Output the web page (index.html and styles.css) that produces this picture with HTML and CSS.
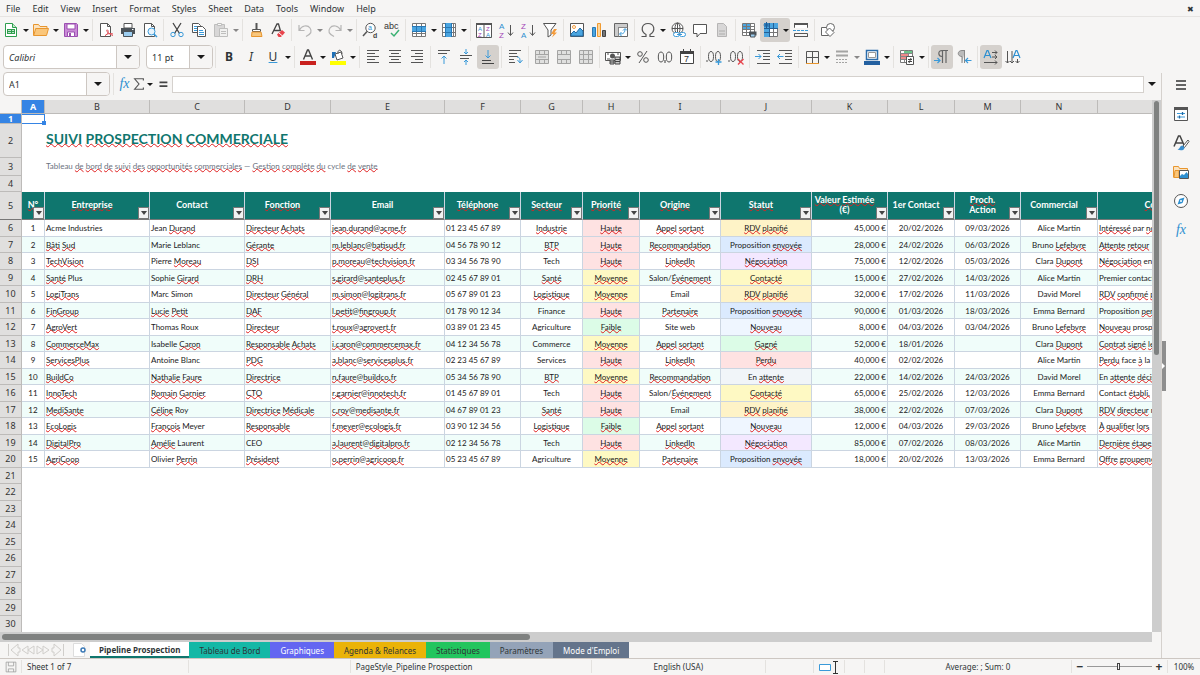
FILE: index.html
```html
<!DOCTYPE html>
<html lang="fr">
<head>
  <meta charset="UTF-8">
  <meta name="viewport" content="width=device-width, initial-scale=1.0">
  <title>Suivi prospection commerciale</title>
  <link rel="stylesheet" href="styles.css">
</head>
<body>
  <nav class="menubar">
    <button>File</button><button>Edit</button><button>View</button><button>Insert</button><button>Format</button><button>Styles</button><button>Sheet</button><button>Data</button><button>Tools</button><button>Window</button><button>Help</button>
    <button class="close" aria-label="Close">✖</button>
  </nav>

  <div class="toolbar">
    <button class="tool" aria-label="New"><svg viewBox="0 0 16 16"><path d="M2.5 1.500h7l4 4v9h-11z" fill="#fff" stroke="#2f9e4f"/><path d="M9.500 1.500v4h4" fill="#bfe8c8" stroke="#2f9e4f"/><path d="M4 7h8v5H4z" fill="#2f9e4f"/><path d="M5 8.500h3M9 8.500h2M5 10.500h3M9 10.500h2" stroke="#bfe8c8"/></svg></button>
    <button class="arrow" aria-label="New options"></button>
    <button class="tool" aria-label="Open"><svg viewBox="0 0 16 16"><path d="M.5 13.500v-11h5l1.500 2h7v3" fill="#fbe3c0" stroke="#e8962e"/><path d="M.7 13.500l2-7H15.500l-2 7z" fill="#fac67a" stroke="#e8962e"/></svg></button>
    <button class="arrow" aria-label="Open options"></button>
    <button class="tool" aria-label="Save"><svg viewBox="0 0 16 16"><path d="M1.500 1.500h12l1 1v12h-13z" fill="#c98ad6" stroke="#9b4fb0"/><path d="M4 2h8v5H4z" fill="#fff" stroke="#9b4fb0"/><path d="M4.500 10h7v4.500h-7z" fill="#fff" stroke="#9b4fb0"/><path d="M6 11h2v3H6z" fill="#9b4fb0"/></svg></button>
    <button class="arrow" aria-label="Save options"></button>
    <span class="sep"></span>
    <button class="tool" aria-label="Export as PDF"><svg viewBox="0 0 16 16"><path d="M2.500 1.500h7l3 3v10h-10z" fill="#fff" stroke="#555"/><path d="M9.500 1.500v3h3" fill="none" stroke="#555"/><path d="M7 14c3-2 4-5 2.500-6s-1.500 3 5.500 5.500M7.500 13c2-1.500 5-2 7.500-1" fill="none" stroke="#e05058"/></svg></button>
    <button class="tool" aria-label="Print"><svg viewBox="0 0 16 16"><path d="M4 1.500h8V6H4z" fill="#fff" stroke="#555"/><path d="M1 6h14v6H1z" fill="#4b5258"/><path d="M12 7.500h1.500" stroke="#fff"/><path d="M3.500 9.500h9v5h-9z" fill="#9ccdf0" stroke="#4b5258"/></svg></button>
    <button class="tool" aria-label="Print preview"><svg viewBox="0 0 16 16"><path d="M2.500 1.500h7l3 3v10h-10z" fill="#fff" stroke="#555"/><path d="M9.500 1.500v3h3" fill="none" stroke="#555"/><circle cx="9.500" cy="9.500" r="3.500" fill="#e8f3fb" stroke="#3a9ad9"/><path d="M12 12l3 3" stroke="#3a9ad9" stroke-width="1.500"/></svg></button>
    <span class="sep"></span>
    <button class="tool" aria-label="Cut"><svg viewBox="0 0 16 16"><path d="M4 1l6.500 10.500M12 1L5.500 11.500" stroke="#444" stroke-width="1.300"/><circle cx="4" cy="12.500" r="2.200" fill="none" stroke="#3a9ad9"/><circle cx="12" cy="12.500" r="2.200" fill="none" stroke="#3a9ad9"/></svg></button>
    <button class="tool" aria-label="Copy"><svg viewBox="0 0 16 16"><path d="M1.500 1.500h6l2 2v7h-8z" fill="#fff" stroke="#555"/><path d="M3 4.500h4M3 6.500h4M3 8.500h3" stroke="#3a9ad9"/><path d="M6.500 4.500h5l3 3v7h-8z" fill="#fff" stroke="#555"/><path d="M8 8.500h4M8 10.500h5M8 12.500h5" stroke="#3a9ad9"/></svg></button>
    <button class="tool faded" aria-label="Paste"><svg viewBox="0 0 16 16"><path d="M1.500 2.500h10v12h-10z" fill="#bbb" stroke="#888"/><path d="M4.500 1.500h4v2h-4z" fill="#fff" stroke="#888"/><path d="M6.500 6.500h8v8h-8z" fill="#eee" stroke="#888"/><path d="M8 9.500h5M8 11.500h5" stroke="#888"/></svg></button>
    <button class="arrow faded" aria-label="Paste options"></button>
    <span class="sep"></span>
    <button class="tool" aria-label="Clone formatting"><svg viewBox="0 0 16 16"><path d="M8.500 1v6" stroke="#555" stroke-width="2"/><path d="M4.500 7.500h8v2h-8z" fill="#fff" stroke="#555"/><path d="M4 10h9l1 4.500H3.500z" fill="#f8c77e" stroke="#e8962e"/></svg></button>
    <button class="tool" aria-label="Clear formatting"><svg viewBox="0 0 16 16"><path d="M2 12L7 2h1.500l2 7M4 8.500h6" fill="none" stroke="#444" stroke-width="1.300"/><path d="M7 12.500L12 8l3 2.500-4 4.500H8.500z" fill="#e8444c"/><path d="M9 11l3.500 3" stroke="#fff"/></svg></button>
    <span class="sep"></span>
    <button class="tool faded" aria-label="Undo"><svg viewBox="0 0 16 16"><path d="M2 3v5.500h5.500M2.500 8c2-4.500 8-5.500 10.500-2s1 6-4 8.500" fill="none" stroke="#777" stroke-width="1.200"/></svg></button>
    <button class="arrow faded" aria-label="Undo history"></button>
    <button class="tool faded" aria-label="Redo"><svg viewBox="0 0 16 16"><path d="M14 3v5.500H8.500M13.500 8C11.500 3.500 5.500 2.500 3 6s-1 6 4 8.500" fill="none" stroke="#777" stroke-width="1.200"/></svg></button>
    <button class="arrow faded" aria-label="Redo history"></button>
    <span class="sep"></span>
    <button class="tool" aria-label="Find and replace"><svg viewBox="0 0 16 16"><circle cx="8.500" cy="6" r="4.700" fill="#fff" stroke="#555"/><path d="M5 9.500L1 14" stroke="#555" stroke-width="1.500"/><text x="6" y="8" font-size="7" fill="#2d8fd0">a</text><text x="11" y="16" font-size="7" font-weight="bold" fill="#444">d</text></svg></button>
    <button class="tool" aria-label="Spelling"><svg viewBox="0 0 16 16"><text x="0" y="7" font-size="9" fill="#333">abc</text><path d="M7 11l3 3 5-6" fill="none" stroke="#3bb273" stroke-width="1.500"/></svg></button>
    <span class="sep"></span>
    <button class="tool" aria-label="Row"><svg viewBox="0 0 16 16"><path d="M1.500 1.500h13v13h-13z" fill="#fff" stroke="#777"/><path d="M1.500 11.500h13M5.500 1v14M10.500 1v14" stroke="#777"/><path d="M1 5h14v4H1z" fill="#4aa5e0"/><path d="M1 4.500h14M1 9.500h14M5.500 5v4M10.500 5v4" stroke="#2878b5"/></svg></button>
    <button class="arrow" aria-label="Row options"></button>
    <button class="tool" aria-label="Column"><svg viewBox="0 0 16 16"><path d="M1.500 1.500h13v13h-13z" fill="#fff" stroke="#777"/><path d="M12.500 1v14M1.500 5.500h13M1.500 10.500h13" stroke="#777"/><path d="M5 1h5v14H5z" fill="#4aa5e0"/><path d="M4.500 1v14M10.500 1v14M5 5.500h5M5 10.500h5" stroke="#2878b5"/></svg></button>
    <button class="arrow" aria-label="Column options"></button>
    <span class="sep"></span>
    <button class="tool" aria-label="Sort"><svg viewBox="0 0 16 16"><path d="M.5 1.500h15v14H.5zM8 2v13" fill="#fff" stroke="#555"/><path d="M0 1h16v2H0z" fill="#555"/><text x="2" y="9" font-size="6" fill="#2d8fd0">A</text><text x="2" y="15" font-size="6" fill="#a33fb5">Z</text><text x="10" y="9" font-size="6" fill="#a33fb5">Z</text><text x="10" y="15" font-size="6" fill="#2d8fd0">A</text></svg></button>
    <button class="tool" aria-label="Sort ascending"><svg viewBox="0 0 16 16"><text x="1" y="7" font-size="8" fill="#2d8fd0">A</text><text x="1" y="16" font-size="8" fill="#a33fb5">Z</text><path d="M12.500 3v10M10 10.500l2.500 3 2.500-3" fill="none" stroke="#555"/></svg></button>
    <button class="tool" aria-label="Sort descending"><svg viewBox="0 0 16 16"><text x="1" y="7" font-size="8" fill="#a33fb5">Z</text><text x="1" y="16" font-size="8" fill="#2d8fd0">A</text><path d="M12.500 3v10M10 10.500l2.500 3 2.500-3" fill="none" stroke="#555"/></svg></button>
    <button class="tool" aria-label="AutoFilter"><svg viewBox="0 0 16 16"><path d="M1.500 1.500h12.500L9 8v5l-3 2V8z" fill="#fff" stroke="#555"/><path d="M12 7l-3 5h2.500L10 15.500l5-5h-2.500L15 7z" fill="#f39b3b"/></svg></button>
    <span class="sep"></span>
    <button class="tool" aria-label="Insert image"><svg viewBox="0 0 16 16"><path d="M1.500 1.500h13v13h-13z" fill="#fff" stroke="#555"/><circle cx="5" cy="5" r="1.500" fill="#fff" stroke="#f39b3b"/><path d="M2 14v-2l3-3 2 2 4-5 3 3v5z" fill="#4aa5e0" stroke="#236aa5"/></svg></button>
    <button class="tool" aria-label="Insert chart"><svg viewBox="0 0 16 16"><path d="M1.500 5.500h3v9h-3z" fill="#4aa5e0" stroke="#2878b5"/><path d="M6.500 1.500h3v13h-3z" fill="#fbd59c" stroke="#f09a30"/><path d="M11.500 8.500h3v6h-3z" fill="#777" stroke="#444"/></svg></button>
    <button class="tool" aria-label="Pivot table"><svg viewBox="0 0 16 16"><path d="M1.500 1.500h13v13h-13z" fill="#fff" stroke="#666"/><path d="M2 2h3v12H2zM2 2h12v3H2z" fill="#ccc"/><path d="M5.500 5v9.500M5 5.500h9.500" stroke="#888"/><path d="M7 12c4 0 5-2 5-5M10 8.500L12 6.500l2 2M8.500 10L6.500 12l2 2" fill="none" stroke="#3a9ad9"/></svg></button>
    <span class="sep"></span>
    <button class="tool" aria-label="Special character"><svg viewBox="0 0 16 16"><path d="M1.500 14.500H6v-2C0 9 1.500 1.500 8 1.500S16 9 10 12.500v2h4.500" fill="none" stroke="#555" stroke-width="1.200"/></svg></button>
    <button class="arrow" aria-label="Character options"></button>
    <button class="tool" aria-label="Hyperlink"><svg viewBox="0 0 16 16"><circle cx="7.500" cy="6.500" r="5.500" fill="#fff" stroke="#555"/><path d="M2 6.500h11M7.500 1v11" stroke="#555"/><ellipse cx="7.500" cy="6.500" rx="2.500" ry="5.500" fill="none" stroke="#555"/><rect x="3.500" y="10.500" width="6" height="4" rx="2" fill="#fff" stroke="#3a9ad9"/><rect x="9.500" y="10.500" width="6" height="4" rx="2" fill="#fff" stroke="#3a9ad9"/><path d="M7 12.500h5" stroke="#3a9ad9"/></svg></button>
    <button class="tool" aria-label="Comment"><svg viewBox="0 0 16 16"><path d="M1.500 2.500h13v9H8l-3 3.500v-3.500H1.500z" fill="#fff" stroke="#555"/></svg></button>
    <button class="tool faded" aria-label="Headers and footers"><svg viewBox="0 0 16 16"><path d="M3.500 1.500h6l3 3v10h-9z" fill="#bbb" stroke="#777"/><path d="M5 9h6M5 12h6" stroke="#666"/></svg></button>
    <span class="sep"></span>
    <button class="tool" aria-label="Print area"><svg viewBox="0 0 16 16"><path d="M1.500 1.500h12v12h-12z" fill="#fff" stroke="#777"/><path d="M2 2h8v5H2z" fill="#4aa5e0"/><path d="M1.500 4.500h12M1.500 7.500h12M1.500 10.500h12M5.500 1v13M9.500 1v13" stroke="#777"/><path d="M8 9.500h7.500v4H8z" fill="#4b5258"/><path d="M9.500 12h4.500v3H9.500z" fill="#9ccdf0" stroke="#4b5258"/></svg></button>
    <span class="split on">
      <button class="tool" aria-label="Freeze rows and columns"><svg viewBox="0 0 16 16"><path d="M1.500 1.500h13v13h-13z" fill="#fff" stroke="#777"/><path d="M6.500 10.500h8M10.500 6v9" stroke="#777"/><path d="M1 1h14v5H6v9H1z" fill="#4aa5e0"/><path d="M1 10.500h5M10.500 1v5M1 6.500h14M6.500 1v14" stroke="#235f94"/><path d="M3.500 0v6M.5 3h6M1.500 1l4 4M5.500 1l-4 4" stroke="#1d5e99"/></svg></button>
      <button class="arrow" aria-label="Freeze options"></button>
    </span>
    <button class="tool" aria-label="Split window"><svg viewBox="0 0 16 16"><path d="M1.500 1.500v4h13v-4M1.500 15v-3.500h13V15" fill="none" stroke="#555"/><path d="M2 2h12v4H2z" fill="#fff"/><path d="M1 1h14v2H1zM1 14h14v1H1z" fill="#555"/><path d="M0 8.500h16" stroke="#3a9ad9" stroke-dasharray="3 1"/></svg></button>
    <span class="sep"></span>
    <button class="tool" aria-label="Draw functions"><svg viewBox="0 0 16 16"><path d="M1.500 5.500h7v8h-7z" fill="#fff" stroke="#666"/><circle cx="10.500" cy="5.500" r="4" fill="#fff" stroke="#666"/><path d="M9.500 6l4.500 4.500-4 4L5.500 10z" fill="#fff" stroke="#666"/></svg></button>
  </div>

  <div class="toolbar format">
    <div class="combo font"><input type="text" value="Calibri" aria-label="Font name"><button aria-label="Choose font"></button></div>
    <div class="combo size"><input type="text" value="11 pt" aria-label="Font size"><button aria-label="Choose size"></button></div>
    <span class="sep"></span>
    <button class="tool letter bold">B</button>
    <button class="tool letter ital">I</button>
    <button class="tool letter under">U</button>
    <button class="arrow" aria-label="Underline options"></button>
    <span class="sep"></span>
    <button class="tool" aria-label="Font color"><svg viewBox="0 0 16 16"><path d="M3.500 10.500L7.500 1h1l4 9.500M5 7h6" fill="none" stroke="#444" stroke-width="1.400"/><path d="M0 12h16v4H0z" fill="#c9211e"/></svg></button>
    <button class="arrow" aria-label="Font color options"></button>
    <button class="tool" aria-label="Highlighting"><svg viewBox="0 0 16 16"><path d="M5 5l6-2 2 6-6 2z" fill="#fff" stroke="#555"/><path d="M8 5c-1-5 4-5 4 0" fill="none" stroke="#555"/><path d="M2 3h4L4 9H2z" fill="#1f6fb5"/><path d="M0 12h16v4H0z" fill="#ff0"/></svg></button>
    <button class="arrow" aria-label="Highlighting options"></button>
    <span class="sep"></span>
    <button class="tool" aria-label="Align left"><svg viewBox="0 0 16 16"><path d="M2 1.500h12M2 4.500h8M2 7.500h12M2 10.500h8M2 13.500h12" stroke="#555"/></svg></button>
    <button class="tool" aria-label="Center"><svg viewBox="0 0 16 16"><path d="M2 1.500h12M4 4.500h8M2 7.500h12M4 10.500h8M2 13.500h12" stroke="#555"/></svg></button>
    <button class="tool" aria-label="Align right"><svg viewBox="0 0 16 16"><path d="M2 1.500h12M6 4.500h8M2 7.500h12M6 10.500h8M2 13.500h12" stroke="#555"/></svg></button>
    <span class="sep"></span>
    <button class="tool" aria-label="Align top"><svg viewBox="0 0 16 16"><path d="M2 1.500h12M2 4.500h9" stroke="#555"/><path d="M8 15V7M5.500 9.500L8 7l2.500 2.500" fill="none" stroke="#3a9ad9"/></svg></button>
    <button class="tool" aria-label="Center vertically"><svg viewBox="0 0 16 16"><path d="M2 6.500h12M2 9.500h9" stroke="#555"/><path d="M8 0v5M6 3l2 2 2-2M8 16v-5M6 13l2-2 2 2" fill="none" stroke="#3a9ad9"/></svg></button>
    <button class="tool on" aria-label="Align bottom"><svg viewBox="0 0 16 16"><path d="M2 11.500h9M2 14.500h12" stroke="#444"/><path d="M8 1v8M5.500 6.500L8 9l2.500-2.500" fill="none" stroke="#3a9ad9"/></svg></button>
    <span class="sep"></span>
    <button class="tool" aria-label="Wrap text"><svg viewBox="0 0 16 16"><path d="M2 1.500h12M2 4.500h8M2 7.500h9M2 10.500h5M2 13.500h6" stroke="#555"/><path d="M10 8c3 0 3 2 3 5M10.500 11l2.500 3 2.500-3" fill="none" stroke="#3a9ad9"/></svg></button>
    <span class="sep"></span>
    <button class="tool faded" aria-label="Merge and center"><svg viewBox="0 0 16 16"><path d="M1.500 1.500h13v13h-13zM1.500 5.500h13M1.500 10.500h13M5.500 1.500v4M10.500 1.500v4M5.500 10.500v4M10.500 10.500v4M4 8h8" fill="#ccc" stroke="#555"/></svg></button>
    <button class="tool faded" aria-label="Merge cells"><svg viewBox="0 0 16 16"><path d="M1.500 1.500h13v13h-13zM1.500 5.500h13M1.500 10.500h13M5.500 1.500v4M10.500 1.500v4M5.500 10.500v4M10.500 10.500v4" fill="#ccc" stroke="#555"/></svg></button>
    <button class="tool faded" aria-label="Unmerge cells"><svg viewBox="0 0 16 16"><path d="M1.500 1.500h13v13h-13zM1.500 5.500h13M1.500 10.500h13M5.500 1.500v13M10.500 1.500v13" fill="#ccc" stroke="#555"/></svg></button>
    <span class="sep"></span>
    <button class="tool" aria-label="Currency"><svg viewBox="0 0 16 16"><path d="M.5 3.500h15v8H.5z" fill="#fff" stroke="#555"/><circle cx="7.500" cy="7" r="2.500" fill="#555"/><path d="M2 5h2M12 5h2M2 10h3" stroke="#555"/><path d="M5 11h4v4H5zM10 8h5v7h-5z" fill="#ccc" stroke="#444"/><path d="M5 13h4M10 10.500h5M10 12.500h5" stroke="#444"/></svg></button>
    <button class="arrow" aria-label="Currency options"></button>
    <button class="tool" aria-label="Percent"><svg viewBox="0 0 16 16"><circle cx="5" cy="5" r="2.300" fill="none" stroke="#555"/><circle cx="11" cy="11" r="2.300" fill="none" stroke="#555"/><path d="M12 2L4 14" stroke="#555"/></svg></button>
    <button class="tool" aria-label="Number"><svg viewBox="0 0 16 16"><ellipse cx="4" cy="8" rx="2.700" ry="5" fill="none" stroke="#555"/><ellipse cx="12" cy="8" rx="2.700" ry="5" fill="none" stroke="#555"/><path d="M8 11v3" stroke="#555" stroke-width="1.200"/></svg></button>
    <button class="tool" aria-label="Date"><svg viewBox="0 0 16 16"><path d="M1.500 2.500h13v12h-13z" fill="#fff" stroke="#444"/><path d="M1 2h14v3H1z" fill="#444"/><path d="M4.500 0v3M11.500 0v3" stroke="#444"/><text x="5" y="13" font-size="9" fill="#333">7</text></svg></button>
    <span class="sep"></span>
    <button class="tool" aria-label="Add decimal place"><svg viewBox="0 0 16 16"><path d="M1 11v2" stroke="#555"/><ellipse cx="5" cy="7.500" rx="2.500" ry="5" fill="none" stroke="#555"/><ellipse cx="12" cy="7.500" rx="2.500" ry="5" fill="none" stroke="#555"/><path d="M12.500 10v6M9.500 13h6" stroke="#3a9ad9" stroke-width="1.300"/></svg></button>
    <button class="tool" aria-label="Delete decimal place"><svg viewBox="0 0 16 16"><path d="M1 11v2" stroke="#555"/><ellipse cx="5" cy="7.500" rx="2.500" ry="5" fill="none" stroke="#555"/><ellipse cx="12" cy="7.500" rx="2.500" ry="5" fill="none" stroke="#555"/><path d="M10 10l5.500 5.500M15.500 10L10 15.500" stroke="#e8444c" stroke-width="1.300"/></svg></button>
    <span class="sep"></span>
    <button class="tool" aria-label="Increase indent"><svg viewBox="0 0 16 16"><path d="M2 1.500h13M8 4.500h7M8 7.500h7M8 10.500h7M2 14.500h13" stroke="#555"/><path d="M0 7.500h6M3.500 5L6 7.500 3.500 10" fill="none" stroke="#3a9ad9"/></svg></button>
    <button class="tool" aria-label="Decrease indent"><svg viewBox="0 0 16 16"><path d="M2 1.500h13M8 4.500h7M8 7.500h7M8 10.500h7M2 14.500h13" stroke="#555"/><path d="M6.500 7.500h-6M3 5L.5 7.500 3 10" fill="none" stroke="#3a9ad9"/></svg></button>
    <span class="sep"></span>
    <button class="tool" aria-label="Borders"><svg viewBox="0 0 16 16"><path d="M2.500 14V2.500h12V14M8.500 2.500V14M2.500 8.500h12" fill="none" stroke="#555"/><path d="M2 14.500h13" stroke="#e8962e"/></svg></button>
    <button class="arrow" aria-label="Border options"></button>
    <button class="tool faded" aria-label="Border style"><svg viewBox="0 0 16 16"><path d="M2 2.500h12M2 6.500h12" stroke="#555" stroke-width="2"/><path d="M2 10.500h12M2 13.500h12" stroke="#555" stroke-dasharray="2 1"/></svg></button>
    <button class="arrow faded" aria-label="Border style options"></button>
    <button class="tool" aria-label="Border color"><svg viewBox="0 0 16 16"><path d="M2.500 1.500h11v9h-11z" fill="#fff" stroke="#2a6cab" stroke-width="1.500"/><path d="M4.500 3.500h7v5h-7z" fill="#fff" stroke="#999"/><path d="M0 12h16v4H0z" fill="#2360a0"/></svg></button>
    <button class="arrow" aria-label="Border color options"></button>
    <span class="sep"></span>
    <button class="tool" aria-label="Conditional formatting"><svg viewBox="0 0 16 16"><path d="M1.500 1.500h12v12h-12z" fill="#fff" stroke="#777"/><path d="M5.500 1v12M9.500 1v12M1.500 7.500h12" stroke="#888"/><path d="M5 2h8v2H5z" fill="#6cc48a"/><path d="M2 5h7v2H2zM2 8h5v2H2z" fill="#ee8b8b"/><path d="M1.500 4.500h12M1.500 10.500h12" stroke="#888"/><path d="M7.500 7.500h7v8h-7z" fill="#fff" stroke="#555"/><path d="M9 10.500h4M9 12.500h4M12 9l-2 5" stroke="#444"/></svg></button>
    <button class="arrow" aria-label="Conditional options"></button>
    <span class="sep"></span>
    <button class="tool on" aria-label="Left to right"><svg viewBox="0 0 16 16"><path d="M14 1.500H8C3.500 1.500 4 7.500 8 7.500M8.500 2v12M12 2v12" fill="none" stroke="#666" stroke-width="1.200"/><path d="M0 11.500h6M3.500 9L6 11.500 3.500 14" fill="none" stroke="#3a9ad9" stroke-width="1.200"/></svg></button>
    <button class="tool" aria-label="Right to left"><svg viewBox="0 0 16 16"><path d="M9 1.500H6C1 1.500 1 7.500 6 7.500V14M8.500 2v12" fill="#bbb" stroke="#888"/><path d="M15.500 11.500h-6M12 9l-2.500 2.500L12 14" fill="none" stroke="#3a9ad9" stroke-width="1.200"/></svg></button>
    <span class="sep"></span>
    <button class="tool on" aria-label="Horizontal text"><svg viewBox="0 0 16 16"><path d="M1 9L4 1.500h1L8 9M2 6.500h5" fill="none" stroke="#2d8fd0" stroke-width="1.200"/><path d="M9 3.500h5M12 1.500l2 2-2 2M9 8h5M12 6l2 2-2 2M1 13.500h13M12 11.500l2 2-2 2" fill="none" stroke="#555"/></svg></button>
    <button class="tool" aria-label="Vertical text"><svg viewBox="0 0 16 16"><path d="M8 9l3-7.500h1L15 9M9 6.500h5" fill="none" stroke="#2d8fd0" stroke-width="1.200"/><path d="M2.500 2v12M.5 12l2 2 2-2M7 2v12M5 12l2 2 2-2M12.500 10v4M10.500 12l2 2 2-2" fill="none" stroke="#555"/></svg></button>
  </div>

  <main class="workspace">
    <div class="document">
      <div class="formula-bar">
        <div class="combo name"><input type="text" value="A1" aria-label="Name box"><button aria-label="Choose range"></button></div>
        <span class="sep"></span>
        <button class="fn" aria-label="Function wizard"><i>fx</i></button>
        <button class="sigma" aria-label="Select function"><svg viewBox="0 0 16 16"><path d="M13 4V2H3l5 6-5 6h10v-2" fill="none" stroke="#555" stroke-width="1.300"/></svg></button>
        <button class="arrow" aria-label="Function options"></button>
        <button class="equal" aria-label="Formula"><svg viewBox="0 0 16 16"><path d="M4 6h9M4 10.500h9" stroke="#444" stroke-width="2"/></svg></button>
        <input class="formula" type="text" aria-label="Input line">
        <button class="arrow big" aria-label="Expand formula bar"></button>
      </div>
      <div class="sheet-area">
        <div class="sheet">
          <table>
            <colgroup id="cols"></colgroup>
            <thead id="letters"></thead>
            <tbody id="cells"></tbody>
          </table>
        </div>
        <div class="vscroll"><div class="thumb"></div></div>
      </div>
      <div class="hscroll"><div class="thumb"></div></div>
      <div class="tabs">
        <button class="nav" aria-label="First sheet"><svg viewBox="0 0 16 16"><path d="M3.500 2v12M13 2L6 8l7 6V10h2V6h-2z"/></svg></button>
        <button class="nav" aria-label="Previous sheet"><svg viewBox="0 0 16 16"><path d="M8 4L2 8l6 4zM14 4L8 8l6 4z"/></svg></button>
        <button class="nav" aria-label="Next sheet"><svg viewBox="0 0 16 16"><path d="M2 4l6 4-6 4zM8 4l6 4-6 4z"/></svg></button>
        <button class="nav" aria-label="Last sheet"><svg viewBox="0 0 16 16"><path d="M13.500 2v12M4 2l7 6-7 6V10H2V6h2z"/></svg></button>
        <button class="add" aria-label="Add sheet"><svg viewBox="0 0 16 16"><path d="M2.500 1.500h8l3 3v10h-11z" fill="#fff" stroke="#ddd"/><circle cx="12" cy="8" r="2" fill="#fff" stroke="#3a78b5" stroke-width="1.500"/></svg></button>
        <button class="tab active">Pipeline Prospection</button>
        <button class="tab teal">Tableau de Bord</button>
        <button class="tab indigo">Graphiques</button>
        <button class="tab amber">Agenda &amp; Relances</button>
        <button class="tab green">Statistiques</button>
        <button class="tab slate">Paramètres</button>
        <button class="tab dark">Mode d'Emploi</button>
      </div>
    </div>
    <aside class="sidebar">
      <button class="grip" aria-label="Hide sidebar"></button>
      <button aria-label="Sidebar settings"><svg viewBox="0 0 16 16"><path d="M3 4h10M3 8h10M3 12h10" stroke="#333" stroke-width="1.500"/></svg></button>
      <button aria-label="Properties"><svg viewBox="0 0 16 16"><path d="M1.500 1.500h13v13h-13z" fill="#fff" stroke="#555"/><path d="M1 1h14v3H1z" fill="#555"/><path d="M4 7.500h8M4 11h8" stroke="#3a9ad9"/><path d="M9.500 6v3M6.500 9.500v3" stroke="#236aa5" stroke-width="1.300"/></svg></button>
      <button aria-label="Styles"><svg viewBox="0 0 16 16"><path d="M1 11.500L5.500 1H7l4 9M3 8h6.500" fill="none" stroke="#444" stroke-width="1.500"/><path d="M15 5l-5 6 1.500 1.500L16 6.500z" fill="#fff" stroke="#555"/><path d="M9.500 10.500c-3 0-2 3-5 4 3 1.500 7 1 7-2z" fill="#3a8fd0"/></svg></button>
      <button aria-label="Gallery"><svg viewBox="0 0 16 16"><path d="M.5 13.500v-11h5l1 2h8v3" fill="#fbe3c0" stroke="#e8962e"/><path d="M1 13.500l1-7h4v7z" fill="#fac67a" stroke="#e8962e"/><path d="M6.500 6.500h9v8h-9z" fill="#fff" stroke="#555"/><path d="M7 14v-2l2-2 2 1 2.500-3 1.500 2v4z" fill="#2d8fd0"/></svg></button>
      <button aria-label="Navigator"><svg viewBox="0 0 16 16"><circle cx="8" cy="8" r="6.500" fill="#fff" stroke="#555"/><path d="M11.500 4.500L9.500 10l-5 1.500L6.500 6z" fill="#2d8fd0"/><circle cx="8" cy="8" r="1" fill="#fff"/></svg></button>
      <button class="fn" aria-label="Functions"><i>fx</i></button>
    </aside>
  </main>

  <footer class="status">
    <span class="st-save"><svg viewBox="0 0 16 16"><path d="M1.500 1.500h13v13h-13zM4.500 1.500v5h7v-5M4.500 14.500v-4h7v4" fill="none" stroke="#999"/></svg></span>
    <span class="st-sheet">Sheet 1 of 7</span>
    <span class="st-find"></span>
    <span class="st-page">PageStyle_Pipeline Prospection</span>
    <span class="st-lang">English (USA)</span>
    <span class="st-gap"></span>
    <span class="st-mode"><svg class="wide" viewBox="0 0 24 16"><path d="M2.500 5.500h11v6h-11z" fill="#fff" stroke="#3a9ad9"/><path d="M16 2.500h5M16 14.500h5M18.500 2.500v12" stroke="#333"/></svg></span>
    <span class="st-cell"></span>
    <span class="st-cell"></span>
    <span class="st-sum">Average: ; Sum: 0</span>
    <span class="st-zoom">
      <button aria-label="Zoom out">−</button>
      <input type="range" min="0" max="100" value="49" aria-label="Zoom">
      <button aria-label="Zoom in">+</button>
    </span>
    <span class="st-percent">100%</span>
  </footer>

  <script src="sheet.js"></script>
</body>
</html>
```
FILE: styles.css
```css
* {
  box-sizing: border-box;
}
body {
  margin: 0;
  height: 100vh;
  display: flex;
  flex-direction: column;
  overflow: hidden;
  background: #f6f5f4;
  color: #2e3436;
  font-family: "Noto Sans", sans-serif;
  font-size: 9px;
}
button, input {
  font: inherit;
  color: inherit;
  margin: 0;
  padding: 0;
  border: none;
  background: none;
}
button {
  flex: none;
}
svg {
  display: block;
  width: 16px;
  height: 16px;
  overflow: visible;
  font-family: "Liberation Sans", sans-serif;
}

/* menu */
.menubar {
  display: flex;
  flex: none;
  height: 17px;
  border-bottom: 1px solid #e6e4e2;
}
.menubar button {
  padding: 0 6px;
}
.menubar .close {
  margin-left: auto;
  font-size: 8px;
}

/* toolbars */
.toolbar {
  display: flex;
  align-items: center;
  flex: none;
  height: 26px;
}
.toolbar.format {
  height: 30px;
  padding-left: 3px;
  padding-bottom: 2px;
}
.tool {
  display: flex;
  align-items: center;
  justify-content: center;
  width: 22px;
  height: 24px;
  border-radius: 3px;
}
.arrow {
  display: flex;
  align-items: center;
  justify-content: center;
  width: 8px;
  height: 24px;
}
.arrow::before, .combo button::before {
  content: "";
  border: 3px solid transparent;
  border-top-color: #1a1a1a;
  border-bottom: none;
}
.arrow.big {
  width: 15px;
}
.arrow.big::before, .combo button::before {
  border-width: 4px;
  border-bottom: none;
}
.faded {
  opacity: 0.5;
}
.on {
  background: #d5d1cd;
  border-radius: 3px;
}
.split {
  display: flex;
}
.sep {
  flex: none;
  width: 1px;
  height: 22px;
  margin: 0 2px;
  background: #e4e2df;
}
.combo {
  display: flex;
  flex: none;
  height: 24px;
  border: 1px solid #cdc7c2;
  border-radius: 4px;
  background: #fff;
  overflow: hidden;
}
.combo input {
  flex: 1;
  min-width: 0;
  padding-left: 5px;
}
.combo button {
  display: flex;
  align-items: center;
  justify-content: center;
  width: 23px;
  border-left: 1px solid #cdc7c2;
  background: #f6f5f4;
}
.combo.font {
  width: 137px;
  margin-right: 6px;
}
.combo.font input {
  font-style: italic;
}
.combo.size {
  width: 67px;
}
.combo.name {
  width: 107px;
}
.letter {
  font-size: 12px;
  line-height: 16px;
}
.bold {
  font-weight: bold;
}
.ital {
  font-style: italic;
}
.under {
  text-decoration: underline;
  text-decoration-color: #3a9ad9;
}

/* document */
.workspace {
  display: flex;
  flex: 1;
  min-height: 0;
}
.document {
  display: flex;
  flex-direction: column;
  flex: 1;
  min-width: 0;
}
.formula-bar {
  display: flex;
  align-items: center;
  flex: none;
  height: 27px;
  padding: 0 2px 5px 3px;
}
.formula-bar .sep {
  margin: 0 3px;
}
.formula-bar svg {
  width: 14px;
  height: 14px;
}
.fn {
  color: #2d8fd0;
  font-family: "Liberation Serif", serif;
  font-size: 14px;
  line-height: 16px;
  width: 15px;
}
.equal {
  margin: 0 2px;
}
.formula {
  flex: 1;
  height: 17px;
  border: 1px solid #d5d1cd;
  background: #fff;
}
.sheet-area {
  display: flex;
  flex: 1;
  min-height: 0;
}
.sheet {
  flex: 1;
  min-width: 0;
  overflow: hidden;
  background: #fff;
}
table {
  table-layout: fixed;
  width: 1260px;
  border-collapse: separate;
  border-spacing: 0;
  font-family: Lato, Carlito, sans-serif;
  font-size: 8px;
  line-height: 10px;
  color: #1a1a1a;
}
th, td {
  height: 17px;
  padding: 0 1px;
  overflow: hidden;
  white-space: nowrap;
  text-align: left;
}
thead th, th.num {
  padding: 0;
  border: solid #bdbbb9;
  border-width: 0 1px 1px 0;
  background: #e0dfde;
  color: #333;
  font-family: "Noto Sans", sans-serif;
  font-size: 9px;
  font-weight: normal;
  text-align: center;
}
thead th {
  height: 14px;
}
thead th.corner {
  background: #f6f5f4;
}
thead th.current, th.num.current {
  background: #3584e4;
  color: #fff;
  font-weight: bold;
}
.row-1 th, .row-1 td {
  height: 10px;
  line-height: 9px;
}
.row-2 th, .row-2 td {
  height: 34px;
}
.row-3 th, .row-3 td {
  height: 18px;
}
.row-4 th, .row-4 td {
  height: 16px;
}
.row-5 th, .row-5 td {
  height: 28px;
  border-bottom: 1px solid #777;
}
.row-odd th, .row-odd td {
  height: 16px;
}
td.cursor {
  position: relative;
  overflow: visible;
  border: 1px solid #3584e4;
  border-left: none;
}
td.cursor::after {
  content: "";
  position: absolute;
  right: -2px;
  bottom: -2px;
  width: 4px;
  height: 4px;
  background: #3584e4;
}
td.title {
  padding-bottom: 4px;
  color: #0f766e;
  font-size: 14px;
  line-height: 18px;
  font-weight: bold;
}
td.subtitle {
  padding-bottom: 2px;
  color: #6b7280;
}
td.head {
  position: relative;
  padding-right: 11px;
  padding-bottom: 2px;
  border-right: 1px solid #cbd5e1;
  background: #0f766e;
  color: #fff;
  font-weight: bold;
  font-size: 9px;
  text-align: center;
  white-space: normal;
}
td.head:nth-child(2) {
  padding-right: 1px;
}
.filter {
  position: absolute;
  right: 0;
  bottom: 0;
  display: flex;
  align-items: center;
  justify-content: center;
  width: 11px;
  height: 12px;
  border: 1px solid #777;
  background: #f2f2f2;
}
.filter::before {
  content: "";
  border: 3px solid transparent;
  border-top: 4px solid #444;
  border-bottom: none;
}
td.data {
  border: solid #cbd5e1;
  border-width: 0 1px 1px 0;
}
.row-odd td.data {
  background: #f0fdfa;
}
td.center {
  text-align: center;
}
td.right {
  text-align: right;
}
td.data.haute, td.data.perdu {
  background: #fee2e2;
}
td.data.moyenne, td.data.contacte {
  background: #fef9c3;
}
td.data.faible, td.data.gagne {
  background: #dcfce7;
}
td.data.rdv {
  background: #fef3c7;
}
td.data.proposition {
  background: #dbeafe;
}
td.data.negociation {
  background: #f3e8ff;
}
td.data.nouveau {
  background: #eff6ff;
}
td.data.attente {
  background: #f1f5f9;
}
.typo {
  text-decoration: underline wavy #e02020 1px;
  text-decoration-skip-ink: none;
  text-underline-offset: -1px;
}

/* scrollbars */
.vscroll {
  flex: none;
  width: 9px;
  padding: 1px 2px;
  background: #cdcdcd;
}
.vscroll .thumb {
  height: 48%;
  border-radius: 3px;
  background: #7f8180;
}
.hscroll {
  flex: none;
  height: 10px;
  padding: 2px;
  margin-right: 9px;
  background: #cdcdcd;
}
.hscroll .thumb {
  width: 46%;
  height: 6px;
  border-radius: 3px;
  background: #7f8180;
}

/* sheet tabs */
.tabs {
  display: flex;
  flex: none;
  height: 16px;
  padding-left: 5px;
  font-size: 8px;
}
.nav {
  width: 15px;
}
.nav svg {
  fill: none;
  stroke: #d0cecb;
}
.add {
  width: 25px;
  padding-left: 6px;
}
.tab {
  padding: 0 10px;
  white-space: nowrap;
}
.tab.active {
  padding: 0 9px;
  background: #fff;
  border-bottom: 2px solid #0f766e;
  font-weight: bold;
}
.teal {
  background: #14b8a6;
}
.indigo {
  background: #6366f1;
  color: #fff;
}
.amber {
  background: #eab308;
}
.green {
  background: #22c55e;
}
.slate {
  background: #94a3b8;
}
.dark {
  background: #64748b;
  color: #fff;
}

/* sidebar */
.sidebar {
  position: relative;
  display: flex;
  flex-direction: column;
  align-items: center;
  flex: none;
  gap: 13px;
  width: 39px;
  padding-top: 4px;
  border-left: 1px solid #d5d1cd;
}
.grip {
  position: absolute;
  left: 0;
  top: 50%;
  transform: translateY(-50%);
  width: 4px;
  height: 50px;
  background: #8e8e8e;
}
.grip::before {
  content: "";
  display: block;
  width: 0;
  border: 3px solid transparent;
  border-left: 3px solid #fff;
  border-right: none;
}

/* status bar */
.status {
  display: flex;
  flex: none;
  height: 17px;
  border-top: 1px solid #cdc7c2;
  font-size: 8px;
}
.status > span {
  display: flex;
  align-items: center;
  justify-content: center;
  margin: 1px 0 2px;
  border-right: 1px solid #e4e2df;
  white-space: nowrap;
}
.status .st-save {
  width: 22px;
}
.st-save svg {
  width: 12px;
  height: 12px;
}
.status .st-sheet {
  flex: 164;
  justify-content: flex-start;
  padding-left: 5px;
}
.st-find {
  flex: 164;
}
.status .st-page {
  flex: 240;
  justify-content: flex-start;
  padding-left: 5px;
}
.st-lang {
  flex: 176;
}
.st-gap {
  flex: 48;
}
.st-mode {
  width: 31px;
}
.st-mode .wide {
  width: 24px;
}
.st-cell {
  width: 20px;
}
.st-sum {
  flex: 190;
}
.st-zoom {
  width: 96px;
}
.st-zoom button {
  width: 14px;
  font-size: 12px;
  line-height: 12px;
  font-weight: bold;
}
.st-zoom input {
  width: 65px;
  height: 10px;
  appearance: none;
  background: linear-gradient(#999, #999) center / 100% 1px no-repeat;
}
.st-zoom input::-webkit-slider-thumb {
  appearance: none;
  width: 3px;
  height: 7px;
  border: 1px solid #444;
  background: #f6f5f4;
}
.status .st-percent {
  width: 32px;
  border-right: none;
}
```
FILE: sheet.js
```js
// column letter, width, header, alignment
const columns = [
  ["A", 23, "~N°", "center"],
  ["B", 105, "~Entreprise", ""],
  ["C", 95, "Contact", ""],
  ["D", 86, "~Fonction", ""],
  ["E", 114, "Email", ""],
  ["F", 76, "~Téléphone", ""],
  ["G", 62, "~Secteur", "center"],
  ["H", 57, "~Priorité", "center"],
  ["I", 81, "~Origine", "center"],
  ["J", 91, "~Statut", "center"],
  ["K", 76, "~Valeur ~Estimée (€)", "right"],
  ["L", 67, "1er Contact", "center"],
  ["M", 66, "~Proch. Action", "center"],
  ["N", 77, "Commercial", "center"],
  ["O", 162, "~Commentaires", ""]
];

// a ~ marks a word that the spell checker underlines
const rows = [
  ["Acme Industries", "Jean ~Durand", "~Directeur ~Achats", "~jean.durand@~acme.fr", "01 23 45 67 89", "~Industrie", "~Haute", "~Appel ~sortant", "~RDV ~planifié", "45,000 €", "20/02/2026", "09/03/2026", "Alice Martin", "~Intéressé par ~nos"],
  ["~Bâti ~Sud", "Marie Leblanc", "~Gérante", "~m.leblanc@~batisud.fr", "04 56 78 90 12", "~BTP", "~Haute", "~Recommandation", "Proposition ~envoyée", "28,000 €", "24/02/2026", "06/03/2026", "Bruno ~Lefebvre", "~Attente ~retour"],
  ["~TechVision", "Pierre ~Moreau", "~DSI", "~p.moreau@~techvision.fr", "03 34 56 78 90", "Tech", "~Haute", "~LinkedIn", "~Négociation", "75,000 €", "12/02/2026", "05/03/2026", "Clara ~Dupont", "~Négociation en cours"],
  ["~Santé Plus", "Sophie ~Girard", "~DRH", "~s.girard@~santeplus.fr", "02 45 67 89 01", "~Santé", "~Moyenne", "Salon/~Événement", "~Contacté", "15,000 €", "27/02/2026", "14/03/2026", "Alice Martin", "Premier contact"],
  ["~LogiTrans", "Marc Simon", "~Directeur ~Général", "~m.simon@~logitrans.fr", "05 67 89 01 23", "~Logistique", "~Moyenne", "Email", "~RDV ~planifié", "32,000 €", "17/02/2026", "11/03/2026", "David Morel", "~RDV ~confirmé ~pour"],
  ["~FinGroup", "~Lucie ~Petit", "~DAF", "~l.petit@~fingroup.fr", "01 78 90 12 34", "Finance", "~Haute", "~Partenaire", "Proposition ~envoyée", "90,000 €", "01/03/2026", "18/03/2026", "Emma Bernard", "Proposition ~personnalisée"],
  ["~AgroVert", "Thomas Roux", "~Directeur", "~t.roux@~agrovert.fr", "03 89 01 23 45", "Agriculture", "~Faible", "Site web", "~Nouveau", "8,000 €", "04/03/2026", "03/04/2026", "Bruno ~Lefebvre", "~Nouveau prospect"],
  ["~CommerceMax", "Isabelle ~Caron", "~Responsable ~Achats", "~i.caron@~commercemax.fr", "04 12 34 56 78", "Commerce", "~Moyenne", "~Appel ~sortant", "~Gagné", "52,000 €", "18/01/2026", "", "Clara ~Dupont", "~Contrat ~signé ~le"],
  ["~ServicesPlus", "Antoine Blanc", "~PDG", "~a.blanc@~servicesplus.fr", "02 23 45 67 89", "Services", "~Haute", "~LinkedIn", "~Perdu", "40,000 €", "02/02/2026", "", "Alice Martin", "~Perdu face ~à la concurrence"],
  ["~BuildCo", "~Nathalie ~Faure", "~Directrice", "~n.faure@~buildco.fr", "05 34 56 78 90", "~BTP", "~Moyenne", "~Recommandation", "En ~attente", "22,000 €", "14/02/2026", "24/03/2026", "David Morel", "En ~attente ~décision"],
  ["~InnoTech", "~Romain ~Garnier", "~CTO", "~r.garnier@~innotech.fr", "01 45 67 89 01", "Tech", "~Haute", "Salon/~Événement", "~Contacté", "65,000 €", "25/02/2026", "12/03/2026", "Emma Bernard", "Contact ~établi."],
  ["~MediSante", "~Céline Roy", "~Directrice ~Médicale", "~c.roy@~medisante.fr", "04 67 89 01 23", "~Santé", "~Haute", "Email", "~RDV ~planifié", "38,000 €", "22/02/2026", "07/03/2026", "Clara ~Dupont", "~RDV ~directeur médical"],
  ["~EcoLogis", "~François Meyer", "~Responsable", "~f.meyer@~ecologis.fr", "03 90 12 34 56", "~Logistique", "~Faible", "~Appel ~sortant", "~Nouveau", "12,000 €", "04/03/2026", "29/03/2026", "Bruno ~Lefebvre", "~À ~qualifier ~lors"],
  ["~DigitalPro", "~Amélie Laurent", "CEO", "~a.laurent@~digitalpro.fr", "02 12 34 56 78", "Tech", "~Haute", "~LinkedIn", "~Négociation", "85,000 €", "07/02/2026", "08/03/2026", "Alice Martin", "~Dernière ~étape"],
  ["~AgriCoop", "Olivier ~Perrin", "~Président", "~o.perrin@~agricoop.fr", "05 23 45 67 89", "Agriculture", "~Moyenne", "~Partenaire", "Proposition ~envoyée", "18,000 €", "20/02/2026", "13/03/2026", "Emma Bernard", "~Offre ~groupement"]
];

const fills = {
  "~Haute": "haute",
  "~Moyenne": "moyenne",
  "~Faible": "faible",
  "~RDV ~planifié": "rdv",
  "Proposition ~envoyée": "proposition",
  "~Négociation": "negociation",
  "~Contacté": "contacte",
  "~Nouveau": "nouveau",
  "~Gagné": "gagne",
  "~Perdu": "perdu",
  "En ~attente": "attente"
};

function spell(text) {
  return text.replace(/~([^\s@]+)/g, '<span class="typo">$1</span>');
}

function row(n, cells) {
  const parity = n > 5 ? (n % 2 ? " row-odd" : " row-even") : "";
  const current = n === 1 ? " current" : "";
  return `<tr class="row-${n}${parity}"><th scope="row" class="num${current}">${n}</th>${cells}</tr>`;
}

document.getElementById("cols").innerHTML =
  '<col style="width:22px">' + columns.map(c => `<col style="width:${c[1]}px">`).join("");

document.getElementById("letters").innerHTML =
  '<tr><th class="corner"></th>' +
  columns.map((c, i) => `<th scope="col" class="${i === 0 ? "current" : ""}">${c[0]}</th>`).join("") + "</tr>";

let html = row(1, '<td class="cursor"></td><td colspan="14"></td>');
html += row(2, `<td></td><td class="title" colspan="14">${spell("~SUIVI ~PROSPECTION ~COMMERCIALE")}</td>`);
html += row(3, `<td></td><td class="subtitle" colspan="14">${spell("Tableau ~de ~bord ~de ~suivi ~des ~opportunités ~commerciales — ~Gestion ~complète ~du cycle ~de ~vente")}</td>`);
html += row(4, '<td colspan="15"></td>');
html += row(5, columns.map(c => `<td class="head">${spell(c[2])}<button class="filter" aria-label="Filter ${c[0]}"></button></td>`).join(""));

rows.forEach((r, i) => {
  const cells = [String(i + 1), ...r].map((text, k) => {
    const fill = (k === 7 || k === 9) && fills[text] || "";
    return `<td class="data ${columns[k][3]} ${fill}">${spell(text)}</td>`;
  });
  html += row(i + 6, cells.join(""));
});
for (let n = 21; n <= 30; n++) {
  html += row(n, '<td colspan="15"></td>');
}
document.getElementById("cells").innerHTML = html;
```
